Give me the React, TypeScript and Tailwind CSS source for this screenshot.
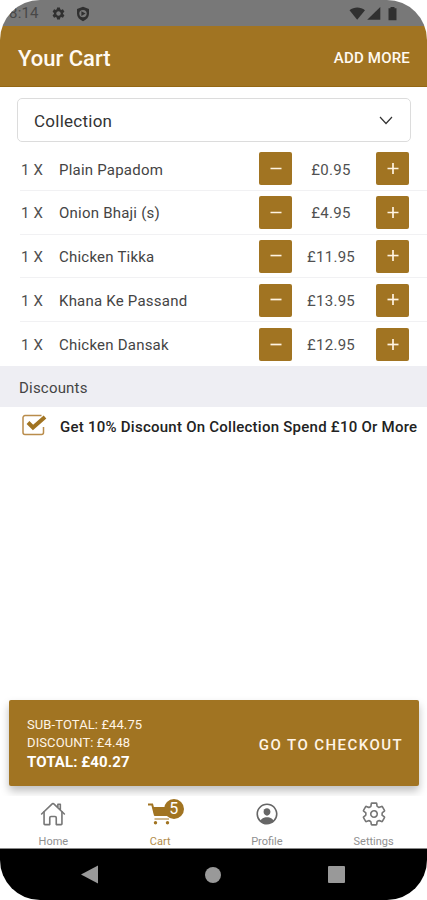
import { useState } from 'react';
import { IoHomeOutline, IoPersonCircleOutline, IoSettingsOutline } from 'react-icons/io5';
import { MdSettings } from 'react-icons/md';

const items = [
    { id: 1, name: 'Plain Papadom', price: '0.95' },
    { id: 2, name: 'Onion Bhaji (s)', price: '4.95' },
    { id: 3, name: 'Chicken Tikka', price: '11.95' },
    { id: 4, name: 'Khana Ke Passand', price: '13.95' },
    { id: 5, name: 'Chicken Dansak', price: '12.95' },
];

function StatusBar() {
    return (
        <div className="flex h-[26px] shrink-0 items-center justify-between bg-[#787878] pt-px pr-[29px] text-[#303030]">
            <div className="flex items-center">
                <span className="w-[39px] pl-[9px] text-[15px] leading-none tracking-[0.2px] text-[#484848]">8:14</span>
                <MdSettings className="ml-[12px]" size={15} />
                <svg className="ml-[10px]" width="14" height="16" viewBox="0 0 14 16">
                    <path fill="currentColor" d="M7 .8 13 3v4.8c0 3.4-2.3 5.8-6 7.4-3.700-1.600-6-4-6-7.400V3z" />
                    <circle cx="7" cy="7.600" r="3.700" fill="#787878" />
                    <path fill="currentColor" d="m5.400 5.200 4.200 2.400-4.200 2.400z" />
                </svg>
            </div>
            <svg width="49" height="15" viewBox="0 0 49 15" fill="currentColor">
                <path d="M.5 4.200C5 .6 11.500.6 16 4.200L8.200 13.800z" />
                <path d="M31.300.9v12.900H18.200z" />
                <path d="M39.500 2.300h2V1h4v1.300h2v12h-8z" />
            </svg>
        </div>
    );
}

function QtyButton({ plus }: { plus?: boolean }) {
    return (
        <button className="flex h-[33px] w-[33px] items-center justify-center rounded-[2px] bg-[#a17422]" aria-label={plus ? 'Add one' : 'Remove one'}>
            <svg width="12" height="12" viewBox="0 0 12 12" stroke="#fff4e2" strokeWidth="1.700">
                <path d="M.5 5.500h11" />
                {plus && <path d="M6 0v11" />}
            </svg>
        </button>
    );
}

function CartIcon() {
    return (
        <svg width="24" height="24" viewBox="0 0 24 24" fill="none" stroke="#a17422" strokeWidth="1.400">
            <path d="M0 2.500h4.200L7 13.500" strokeWidth="2" />
            <path d="M4.500 5H23l-2 9H6.500z" fill="#a17422" stroke="none" />
            <path d="M6.500 17h14.500" strokeWidth="1" />
            <circle cx="7.500" cy="20.700" r="1.700" fill="#a17422" stroke="none" />
            <circle cx="19.500" cy="20.700" r="1.700" fill="#a17422" stroke="none" />
        </svg>
    );
}

export default function App() {
    const [discount, setDiscount] = useState(true);

    return (
        <div className="h-[900px] w-[427px] bg-white font-['Roboto',sans-serif]">
            <div className="flex h-full flex-col overflow-hidden rounded-[40px] bg-white">
                <StatusBar />

                <header className="flex h-[61px] shrink-0 items-center justify-between border-b border-[#946715] bg-[#a17422] pt-[4px] pr-[17px] pl-[18px] text-[#fffaf2]">
                    <h1 className="text-[22px] font-medium">Your Cart</h1>
                    <button className="text-[15px] font-medium tracking-[0.2px]">ADD MORE</button>
                </header>

                <button className="mt-[11px] mr-4 ml-[17px] flex h-[44px] shrink-0 items-center justify-between rounded-[5px] border border-[#dcdcdc] pr-[17px] pl-4">
                    <span className="pt-[3px] text-[17px] tracking-[0.25px] text-[#333]">Collection</span>
                    <svg width="14" height="9" viewBox="0 0 14 9" fill="none" stroke="#333" strokeWidth="1.200">
                        <path d="m1 1 6 6.500L13 1" />
                    </svg>
                </button>

                <ul className="mt-[5px] ml-5 shrink-0">
                    {items.map((item) => (
                        <li key={item.id} className="flex h-[43.800px] items-center border-b border-[#f1f1f3] pt-px pr-[18px] last:border-0">
                            <span className="w-[39px] pt-[2px] pl-px text-[15px] tracking-[0.2px] text-[#505050]">1 X</span>
                            <span className="flex-1 pt-[2px] text-[15px] tracking-[0.22px] text-[#444]">{item.name}</span>
                            <QtyButton />
                            <span className="w-[84px] pt-[2px] pr-[6px] text-center text-[15px] tracking-[0.3px] text-[#505050]">£{item.price}</span>
                            <QtyButton plus />
                        </li>
                    ))}
                </ul>

                <h2 className="flex h-[41px] shrink-0 items-center bg-[#eeeef3] pt-[3px] pl-[19px] text-[15px] tracking-[0.2px] text-[#444]">Discounts</h2>

                <button onClick={() => setDiscount(!discount)} className="flex h-[40px] shrink-0 items-center pl-[22px] text-left">
                    <svg className="mr-[13px] mb-1 shrink-0" width="25" height="22" viewBox="0 0 25 22" fill="none">
                        <path d="M19.500 1.600H3A2 2 0 0 0 1 3.600v15a2 2 0 0 0 2 2h16.500a2 2 0 0 0 2-2V13" stroke="#b98c4b" strokeWidth="1.500" />
                        {discount && <path d="m6 8.500 5 5L23 3" stroke="#a17422" strokeWidth="4" />}
                    </svg>
                    <span className="text-[15px] font-medium whitespace-nowrap tracking-[0.25px] text-[#222]">Get 10% Discount On Collection Spend £10 Or More</span>
                </button>

                <main className="flex-1" />

                <section className="relative mr-2 mb-[10px] ml-[9px] flex h-[86px] shrink-0 items-center justify-between rounded-[2px] bg-[#a17422] pt-px pr-[17px] pl-[18px] text-[#fff4e6] shadow-[0_5px_9px_rgba(0,0,0,0.25)]">
                    <div className="pt-px text-[13px] leading-[18px]">
                        <p className="tracking-[0.1px]">SUB-TOTAL: £44.75</p>
                        <p className="tracking-[0.1px]">DISCOUNT: £4.48</p>
                        <p className="text-[15px] leading-5 font-bold tracking-[0.1px] text-white">TOTAL: £40.27</p>
                    </div>
                    <button className="-mr-px pt-[3px] text-[15px] font-medium tracking-[1.430px]">GO TO CHECKOUT</button>
                </section>

                <nav className="relative grid h-[52px] shrink-0 grid-cols-4 bg-white pt-[5px] text-center text-[11px] leading-3 text-[#909090]">
                    <a className="flex flex-col items-center gap-[9px]">
                        <IoHomeOutline size={26} className="text-[#777]" />
                        <span>Home</span>
                    </a>
                    <a className="relative flex flex-col items-center gap-[9px] text-[#b28c4b]">
                        <span className="h-[26px] pt-px">
                            <CartIcon />
                        </span>
                        <span>Cart</span>
                        <b className="absolute -top-[2px] left-[57px] flex h-[20px] w-[20px] items-center justify-center rounded-full bg-[#a17422] text-[16px] font-normal text-white">5</b>
                    </a>
                    <a className="flex flex-col items-center gap-[9px]">
                        <IoPersonCircleOutline size={26} className="text-[#666]" />
                        <span>Profile</span>
                    </a>
                    <a className="flex flex-col items-center gap-[9px]">
                        <IoSettingsOutline size={26} className="text-[#777]" />
                        <span>Settings</span>
                    </a>
                </nav>

                <footer className="flex h-[52px] shrink-0 items-center justify-between border-t border-[#888] bg-black pr-[82px] pl-[81px]">
                    <svg width="17" height="19" viewBox="0 0 17 19">
                        <path d="M0 9.500 17 .5v18z" fill="#999" />
                    </svg>
                    <span className="h-4 w-4 rounded-full bg-[#999]" />
                    <span className="h-[17px] w-[17px] rounded-[1px] bg-[#999]" />
                </footer>
            </div>
        </div>
    );
}
